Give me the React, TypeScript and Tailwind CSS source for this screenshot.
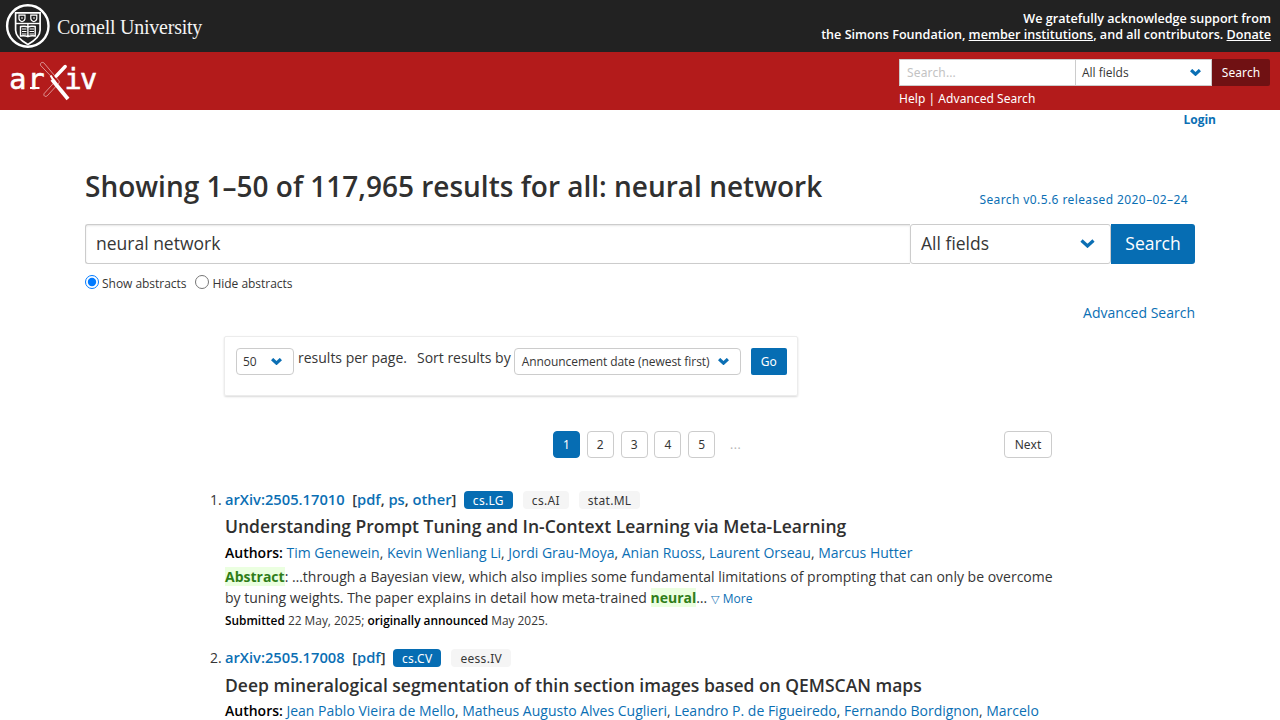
import React from "react";

const link = "text-[#0b6fb4]";
const lucida = "font-['Noto_Sans',sans-serif]";

function Chevron({ size = 12 }: { size?: number }) {
  return (
    <svg width={size} height={size * 0.6} viewBox="0 0 15 9" fill="none" className="shrink-0">
      <path d="M1.5 1.5 7.5 7l6-5.5" stroke="#0b6fb4" strokeWidth={size > 13 ? 3.2 : 4.4} />
    </svg>
  );
}

function Cornell() {
  return (
    <div className="flex">
      <svg width="57" height="52" viewBox="0 0 57 52" fill="none" stroke="#fff">
        <circle cx="27.8" cy="26" r="20.7" strokeWidth="2.4" />
        <path d="M15.6 12.8h24.5v17.5c0 6-5.6 10.5-12.2 14.2-6.7-3.7-12.3-8.2-12.3-14.2z" strokeWidth="1.7" />
        <path d="M15.6 23.5h24.5" strokeWidth="1.4" />
        <path d="M19 15.2v3.3c0 2 1.5 2.700 3 3.200 1.500-.5 3-1.200 3-3.200v-3.300zM30.800 15.200v3.300c0 2 1.500 2.700 3 3.200 1.500-.5 3-1.200 3-3.200v-3.300z" strokeWidth="1.2" />
        <path d="M21 18h2M33 18h2" strokeWidth="1.2" />
        <path d="M20.500 26.500c3-.5 5.500-.5 7.400.5 2-1 4.500-1 7.300-.5v9.500c-3-.5-5.300-.3-7.300.7-2-1-4.500-1.200-7.400-.7zM27.900 24v13" strokeWidth="1.4" />
        <path d="M22 29h4.500M22 31.500h4.500M22 34h4.500M29.500 29h4.500M29.500 31.500h4.500M29.500 34h4.500" strokeWidth="1" />
      </svg>
      <span className="pt-[12px] font-['Liberation_Serif',serif] text-[20px] leading-[30px] tracking-[-0.24px] whitespace-nowrap text-[#f4f4f4]">Cornell University</span>
    </div>
  );
}

function ArxivMark() {
  return (
    <svg width="100" height="58" viewBox="0 52 100 58" fill="none" stroke="#fff">
      <g fill="#fff" stroke="#fff" strokeWidth=".6" fontFamily="DejaVu Sans Mono, monospace" fontSize="28.5">
        <text x="9.300" y="89">a</text>
        <text x="27.500" y="89">r</text>
        <text x="64.500" y="89">i</text>
        <text x="80" y="89">v</text>
      </g>
      <path d="M30 88h9.500" strokeWidth="2" />
      <path d="m40.700 65.500c-1-2.500 1.500-4 3.300-2.500L58.700 80.500c1 1.200.6 2.200-.3 3.200L47.500 95.500c-2 2-4.500.3-3.300-2L55.500 81z" strokeWidth=".7" opacity=".75" />
      <path d="m65.200 66.500-9 9.500" strokeWidth="3.400" strokeLinecap="round" />
      <path d="M52 79.500 68 99" strokeWidth="3.800" />
      <path d="m50.700 75.500 3 5.500" strokeWidth="2" />
    </svg>
  );
}

function Tag({ children, primary }: { children: React.ReactNode; primary?: boolean }) {
  return (
    <span className={`${lucida} mr-[10px] h-[18px] rounded-[4px] px-[9px] text-[12px] leading-[20px] font-normal tracking-[0.3px] ${primary ? "bg-[#066db3] text-white" : "bg-[#f5f5f5] text-[#363636]"}`}>
      {children}
    </span>
  );
}

function Names({ names }: { names: string[] }) {
  return (
    <>
      {names.map((n, i) => (
        <React.Fragment key={n}>
          <a className={link}>{n}</a>
          {i < names.length - 1 ? ", " : ""}
        </React.Fragment>
      ))}
    </>
  );
}

function IdRow({ num, id, formats, children }: { num: number; id: string; formats: string[]; children: React.ReactNode }) {
  return (
    <div className="-ml-[15px] flex h-[20px] items-center">
      <span className="w-[15px] leading-[20px]">{num}.</span>
      <span className="mr-[7.500px] pb-[2px] text-[14.700px] leading-[18px] font-semibold whitespace-pre">
        <a className={link}>{id}</a>{"  ["}
        {formats.map((f, i) => (
          <React.Fragment key={f}>{i > 0 ? ", " : ""}<a className={link}>{f}</a></React.Fragment>
        ))}]
      </span>
      {children}
    </div>
  );
}

export default function App() {
  return (
    <div className="h-[720px] w-[1280px] overflow-hidden bg-white font-['Open_Sans',sans-serif] text-[14px] text-[#363636]">
      <header>
        <div className="flex h-[52px] justify-between bg-[#222] pr-[9px]">
          <Cornell />
          <div className="pt-[11px] text-right text-[12.600px] leading-4 font-semibold text-white">
            <p>We gratefully acknowledge support from</p>
            <p>the Simons Foundation, <u>member institutions</u>, and all contributors. <u>Donate</u></p>
          </div>
        </div>
        <div className="flex h-[58px] justify-between bg-[#b31b1b] pr-[10px]">
          <ArxivMark />
          <div className={`${lucida} w-[371px] pt-[7px] text-[12px]`}>
            <div className="flex h-[27px]">
              <div className="w-[176px] border border-r-0 border-[#ccc] bg-white pl-[7px] leading-[26px] tracking-[0.15px] text-[#c3c3c3]">Search...</div>
              <div className="flex w-[137px] items-center justify-between border border-[#ccc] bg-white pr-[10px] pl-[6px] font-['Open_Sans',sans-serif]">All fields<Chevron size={11} /></div>
              <div className="w-[58px] rounded-r-[2px] bg-[#701113] text-center leading-[27px] tracking-[0.1px] text-white">Search</div>
            </div>
            <div className="mt-[4px] leading-[18px] tracking-[0.050px] text-white">Help | Advanced Search</div>
          </div>
        </div>
      </header>
      <div className="flex h-[20px] justify-end pr-[64px] text-[12px] leading-[20px] font-bold"><a className={link}>Login</a></div>
      <main className="px-[85px] pt-[37px]">
        <div className="flex h-[57px] justify-between">
          <h1 className="text-[28px] leading-[38px] font-semibold whitespace-nowrap text-[#303030]">Showing 1–50 of 117,965 results for all: neural network</h1>
          <a className={`${lucida} ${link} pt-[23px] pr-[7px] text-[12px] leading-[20px] tracking-[0.4px]`}>Search v0.5.6 released 2020–02–24</a>
        </div>
        <div className="flex h-[40px] text-[17.500px]">
          <div className="w-[825px] rounded-l-[3px] border border-r-0 border-[#ccc] pl-[10px] leading-[36px] shadow-[inset_0_1px_2px_rgba(10,10,10,0.1)]">neural network</div>
          <div className="flex w-[201px] items-center justify-between rounded-[3px] border border-[#ccc] pr-[15px] pb-[1px] pl-[10px]">All fields<Chevron size={15} /></div>
          <div className="w-[84px] rounded-r-[3px] bg-[#066db3] text-center leading-[39px] text-white">Search</div>
        </div>
        <div className="flex h-[38px] items-center pt-[1px] text-[12px] tracking-[-0.030px]">
          <input type="radio" checked readOnly className="mr-[3px] mb-[3px] h-[14px] w-[14px] accent-[#007aff]" />Show abstracts
          <input type="radio" readOnly className="mr-[3px] mb-[3px] ml-[9px] h-[14px] w-[14px]" />Hide abstracts
        </div>
        <div className="text-right leading-[21px]"><a className={link}>Advanced Search</a></div>
        <div className="mt-[13px] ml-[139px] flex h-[60px] w-[574px] rounded-[2px] border border-[#ececec] pt-[11px] pl-[11px] shadow-[0_1px_2px_rgba(0,0,0,0.15)]">
          <div className="flex h-[27px] w-[58px] shrink-0 items-center justify-between rounded-[4px] border border-[#ccc] pr-[11px] pl-[6px] text-[12px]">50<Chevron size={11} /></div>
          <span className="ml-[4px] h-[20px] leading-[20px]">results per page.</span>
          <span className="ml-[10px] h-[20px] leading-[20px]">Sort results by</span>
          <div className="ml-[3px] flex h-[27px] w-[227px] shrink-0 items-center justify-between rounded-[4px] border border-[#ccc] pr-[11px] pl-[7px] text-[12px] tracking-[-0.060px] whitespace-nowrap">Announcement date (newest first)<Chevron size={11} /></div>
          <div className={`${lucida} ml-[10px] h-[27px] w-[36px] shrink-0 rounded-[2px] bg-[#066db3] text-center text-[12px] leading-[27px] text-white`}>Go</div>
        </div>
        <div className={`${lucida} mt-[35px] ml-[468px] flex h-[27px] w-[499px] text-[12px]`}>
          {[1, 2, 3, 4, 5].map((n) => (
            <span key={n} className={`mr-[6.800px] w-[27px] rounded-[4px] border text-center leading-[26px] ${n === 1 ? "border-[#066db3] bg-[#066db3] text-white" : "border-[#ccc]"}`}>{n}</span>
          ))}
          <span className="ml-[8px] leading-[27px] tracking-[0.500px] text-[#b5b5b5]">...</span>
          <span className="ml-auto w-[48px] rounded-[4px] border border-[#ccc] text-center leading-[26px] tracking-[0.100px]">Next</span>
        </div>
        <ol className="mt-[32px] ml-[140px] w-[835px]">
          <li>
            <IdRow num={1} id="arXiv:2505.17010" formats={["pdf", "ps", "other"]}><Tag primary>cs.LG</Tag><Tag>cs.AI</Tag><Tag>stat.ML</Tag></IdRow>
            <p className="mt-[4px] text-[17.500px] leading-[24px] font-semibold text-[#303030]">Understanding Prompt Tuning and In-Context Learning via Meta-Learning</p>
            <p className="mt-[4px] leading-[21px]"><b className="font-semibold text-black">Authors:</b> <Names names={["Tim Genewein", "Kevin Wenliang Li", "Jordi Grau-Moya", "Anian Ruoss", "Laurent Orseau", "Marcus Hutter"]} /></p>
            <p className="mt-[3px] leading-[21px] whitespace-nowrap"><b className="bg-[#ebffe0] text-[#2f7d18]">Abstract</b>: …through a Bayesian view, which also implies some fundamental limitations of prompting that can only be overcome<br />by tuning weights. The paper explains in detail how meta-trained <b className="bg-[#ebffe0] text-[#2f7d18]">neural</b>… <a className={`${link} text-[12px]`}><span className="mr-[4px] text-[11px]">▽</span>More</a></p>
            <p className="mt-[2px] text-[11.900px] leading-[18px]"><b className="font-semibold text-black">Submitted</b> 22 May, 2025; <b className="font-semibold text-black">originally announced</b> May 2025.</p>
          </li>
          <li className="mt-[19px]">
            <IdRow num={2} id="arXiv:2505.17008" formats={["pdf"]}><Tag primary>cs.CV</Tag><Tag>eess.IV</Tag></IdRow>
            <p className="mt-[5px] text-[17.500px] leading-[24px] font-semibold text-[#303030]">Deep mineralogical segmentation of thin section images based on QEMSCAN maps</p>
            <p className="mt-[3px] leading-[21px]"><b className="font-semibold text-black">Authors:</b> <Names names={["Jean Pablo Vieira de Mello", "Matheus Augusto Alves Cuglieri", "Leandro P. de Figueiredo", "Fernando Bordignon", "Marcelo"]} /></p>
          </li>
        </ol>
      </main>
    </div>
  );
}
